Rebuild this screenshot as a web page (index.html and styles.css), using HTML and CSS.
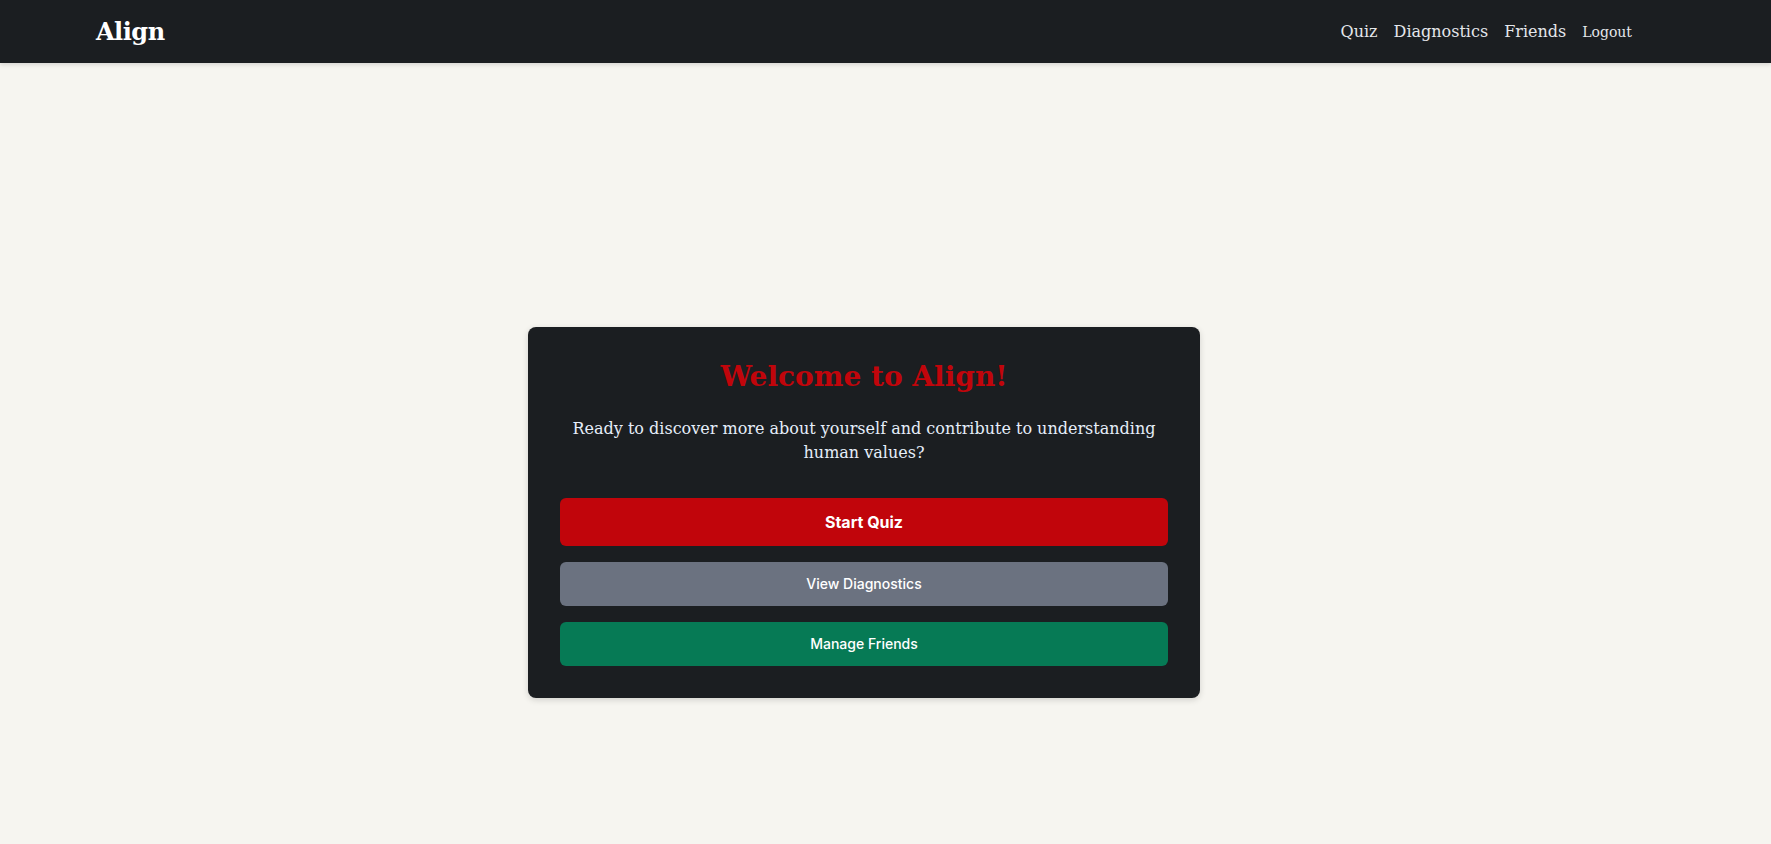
FILE: index.html
```html
<!DOCTYPE html>
<html lang="en">
<head>
    <meta charset="UTF-8">
    <meta name="viewport" content="width=device-width, initial-scale=1.0">
    <title>Align</title>
    <link rel="stylesheet" href="styles.css">
</head>
<body>
    <nav class="navbar">
        <div class="nav-inner">
            <a class="brand" href="#">Align</a>
            <div class="nav-links">
                <a href="#">Quiz</a>
                <a href="#">Diagnostics</a>
                <a href="#">Friends</a>
                <button class="logout">Logout</button>
            </div>
        </div>
    </nav>

    <main class="main">
        <div class="welcome-card">
            <h1 class="welcome-title">Welcome to Align!</h1>
            <p class="welcome-text">Ready to discover more about yourself and contribute to understanding human values?</p>
            <div class="actions">
                <a class="btn btn-primary" href="#">Start Quiz</a>
                <a class="btn btn-gray" href="#">View Diagnostics</a>
                <a class="btn btn-green" href="#">Manage Friends</a>
            </div>
        </div>
    </main>
</body>
</html>
```

FILE: styles.css
```css
body {
    margin: 0;
    padding: 0;
    background-color: #f6f5f0;
    font-family: "DejaVu Serif", "Liberation Serif", serif;
    min-height: 100vh;
}

a {
    text-decoration: none;
    color: inherit;
}

.navbar {
    background-color: #1b1e21;
    box-shadow: 0 2px 4px rgba(0, 0, 0, 0.12);
    padding-right: 43px;
}

.nav-inner {
    max-width: 1536px;
    height: 63px;
    margin: 0 auto;
    display: flex;
    justify-content: space-between;
    align-items: center;
}

.brand {
    color: #fff;
    font-size: 24px;
    font-weight: bold;
    letter-spacing: -0.5px;
}

.nav-links {
    display: flex;
    align-items: center;
    gap: 16px;
}

.nav-links a {
    color: #e5e7eb;
    font-size: 16px;
}

.logout {
    background: none;
    border: none;
    padding: 0;
    color: #e5e7eb;
    font-family: inherit;
    font-size: 14px;
    cursor: pointer;
}

.main {
    padding: 264px 43px 0 0;
    display: flex;
    justify-content: center;
}

.welcome-card {
    width: 672px;
    box-sizing: border-box;
    padding: 32px;
    background-color: #1b1e21;
    border-radius: 8px;
    box-shadow: 0 2px 6px rgba(0, 0, 0, 0.15);
    text-align: center;
}

.welcome-title {
    margin: 0 0 22px;
    color: #c1050b;
    font-size: 28px;
    line-height: 36px;
    font-weight: bold;
}

.welcome-text {
    margin: 0 0 33px;
    padding: 0 8px;
    color: #e6eefa;
    font-size: 16px;
    line-height: 24px;
}

.actions {
    display: flex;
    flex-direction: column;
    gap: 16px;
}

.btn {
    display: block;
    padding: 12px 16px;
    border-radius: 6px;
    color: #fff;
    font-family: Inter, "Liberation Sans", sans-serif;
    font-size: 14px;
    line-height: 20px;
    font-weight: 500;
}

.btn-primary {
    background-color: #c1050b;
    font-size: 16px;
    line-height: 24px;
    font-weight: bold;
}

.btn-gray {
    background-color: #6b7280;
}

.btn-green {
    background-color: #067a55;
}
```
